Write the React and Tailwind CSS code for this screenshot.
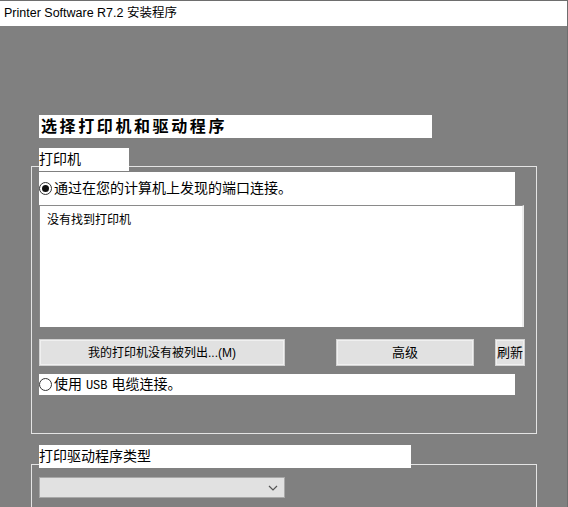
import React from "react";

const CJK = "font-['Liberation_Sans','Noto_Sans_CJK_SC',sans-serif]";

function Radio({ checked }) {
  return (
    <span className="w-[13px] h-[13px] rounded-full border border-[#333] bg-white flex items-center justify-center shrink-0">
      {checked && <span className="w-[7px] h-[7px] rounded-full bg-[#111]" />}
    </span>
  );
}

function Btn({ w, children, size = "text-[12px]" }) {
  return (
    <button
      className={`${w} h-[27px] bg-[#e1e1e1] border border-[#d2d2d2] outline outline-1 -outline-offset-2 outline-[#f0f0f0] ${size} text-black flex items-center justify-center`}
    >
      {children}
    </button>
  );
}

export default function App() {
  return (
    <div className={`w-[568px] h-[507px] overflow-hidden bg-[#808080] border-t border-r border-[#6e6e6e] ${CJK}`}>
      {/* title bar */}
      <div className="h-[25px] bg-white pl-[4px] flex items-center text-[12.5px] text-black">
        Printer Software R7.2 安装程序
      </div>

      {/* page heading */}
      <div className="ml-[39px] mt-[89px] w-[393px] h-[23px] bg-white pl-[2px] flex items-center text-[16px] font-bold tracking-[2.6px] text-black">
        选择打印机和驱动程序
      </div>

      {/* printer group */}
      <div className="relative z-10 ml-[39px] mt-[10px] w-[90px] h-[23px] bg-white flex items-center text-[14px] text-black">
        打印机
      </div>
      <div className="-mt-[5px] ml-[31px] w-[506px] h-[268px] border border-[#e4e4e4] pl-[7px] pt-[5px]">
        <div className="w-[476px] h-[33px] bg-white flex items-center gap-[2px] text-[14px] text-black">
          <Radio checked />
          <span>通过在您的计算机上发现的端口连接。</span>
        </div>
        <div className="w-[485px] h-[122px] bg-white border-t border-l border-[#8a8a8a] border-r-2 border-r-[#ececec] pl-[7px] pt-[5px] text-[12px] text-black">
          没有找到打印机
        </div>
        <div className="mt-[12px] flex">
          <Btn w="w-[246px]">我的打印机没有被列出...(M)</Btn>
          <div className="ml-[51px]">
            <Btn w="w-[138px]" size="text-[13px]">高级</Btn>
          </div>
          <div className="ml-[21px]">
            <Btn w="w-[30px]" size="text-[13px]">刷新</Btn>
          </div>
        </div>
        <div className="mt-[8px] w-[476px] h-[21px] bg-white flex items-center gap-[2px] text-[14px] text-black">
          <Radio />
          <span>
            使用 <span className="font-['Liberation_Mono',monospace] text-[12px]">USB</span> 电缆连接。
          </span>
        </div>
      </div>

      {/* driver type group */}
      <div className="relative z-10 ml-[39px] mt-[11px] w-[372px] h-[23px] bg-white flex items-center text-[14px] text-black">
        打印驱动程序类型
      </div>
      <div className="-mt-[4px] ml-[31px] w-[506px] h-[80px] border border-[#e4e4e4] pl-[7px] pt-[12px]">
        <div className="w-[246px] h-[21px] bg-[#e1e1e1] border border-[#a8a8a8] flex items-center justify-end pr-[6px]">
          <svg width="10" height="6" viewBox="0 0 10 6" fill="none" stroke="#555" strokeWidth="1.2">
            <path d="M1 1l4 4 4-4" />
          </svg>
        </div>
      </div>
    </div>
  );
}
